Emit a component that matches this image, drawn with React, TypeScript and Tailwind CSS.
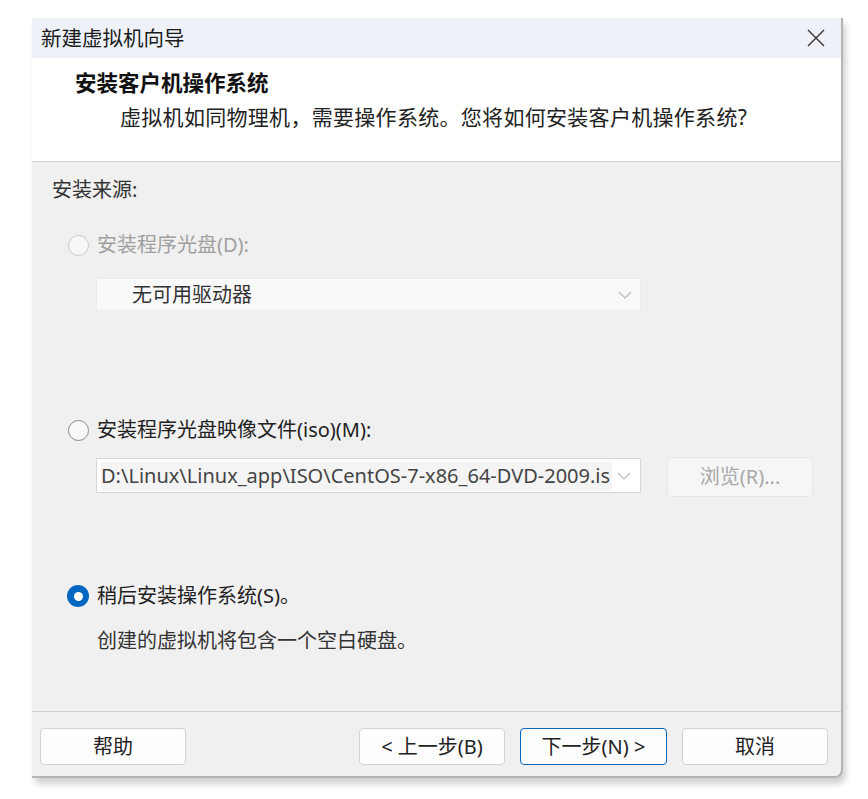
import React from "react";

const font = "font-['Noto_Sans','Noto_Sans_CJK_SC',sans-serif]";

function Chevron({ className }: { className?: string }) {
  return (
    <svg width="14" height="8" viewBox="0 0 14 8" className={className}>
      <path d="M1 1 L7 7 L13 1" fill="none" stroke="currentColor" strokeWidth="1.2" />
    </svg>
  );
}

function Radio({ checked, disabled }: { checked?: boolean; disabled?: boolean }) {
  if (checked) {
    return (
      <span className="flex h-[22px] w-[22px] shrink-0 items-center justify-center rounded-full bg-[#0067c0]">
        <span className="h-[9px] w-[9px] rounded-full bg-white" />
      </span>
    );
  }
  return (
    <span
      className={
        disabled
          ? "h-[21px] w-[21px] shrink-0 rounded-full border border-[#c6c6c6] bg-[#f7f7f7]"
          : "h-[21px] w-[21px] shrink-0 rounded-full border border-[#888888] bg-[#f9f9f9]"
      }
    />
  );
}

function FooterButton({ label, primary }: { label: string; primary?: boolean }) {
  return (
    <button
      className={
        primary
          ? "flex h-[37px] w-[147px] items-center justify-center rounded-[4px] border border-[#0067c0] bg-[#fdfdfd] text-[20px] text-[#222]"
          : "flex h-[37px] w-[146px] items-center justify-center rounded-[4px] border border-[#d3d3d3] bg-[#fdfdfd] text-[20px] text-[#222]"
      }
    >
      {label}
    </button>
  );
}

export default function App() {
  return (
    <div className={`min-h-[799px] w-[868px] bg-white pl-[32px] pt-[18px] ${font}`}>
      <div className="flex h-[760px] w-[811px] flex-col overflow-hidden rounded-br-[8px] border-b-2 border-r-2 border-[#b4b4b4] bg-[#f0f0f0] shadow-[3px_6px_6px_rgba(0,0,0,0.18)]">
        {/* title bar */}
        <div className="flex h-[40px] shrink-0 items-center justify-between bg-[#eef2f8] pl-[9px] pr-[16px]">
          <span className="text-[20.5px] leading-none text-[#1a1a1a]">新建虚拟机向导</span>
          <svg width="18" height="18" viewBox="0 0 18 18" className="text-[#333]">
            <path d="M1 1 L17 17 M17 1 L1 17" stroke="currentColor" strokeWidth="1.4" />
          </svg>
        </div>

        {/* header */}
        <div className="flex h-[104px] shrink-0 flex-col border-b border-[#d2d2d2] bg-white pl-[43px]">
          <div className="mt-[11px] text-[21.5px] font-bold leading-[28px] text-[#111]">
            安装客户机操作系统
          </div>
          <div className="ml-[45px] mt-[6px] text-[21px] leading-[28px] tracking-[0.3px] text-[#222]">
            虚拟机如同物理机，需要操作系统。您将如何安装客户机操作系统?
          </div>
        </div>

        {/* install source */}
        <div className="flex flex-1 flex-col pl-[20px] text-[20px] leading-[28px]">
          <div className="mt-[14px] text-[#333]">安装来源:</div>

          <div className="ml-[16px] mt-[27px] flex items-center gap-[8px] text-[#a0a0a0]">
            <Radio disabled />
            <span>安装程序光盘(D):</span>
          </div>
          <div className="ml-[44px] mt-[19px] flex h-[33px] w-[545px] items-center justify-between border border-[#ececec] bg-[#f9f9f9] pl-[35px] pr-[8px] text-[#333]">
            <span>无可用驱动器</span>
            <Chevron className="text-[#b8b8b8]" />
          </div>

          <div className="ml-[16px] mt-[105px] flex items-center gap-[8px] text-[#222]">
            <Radio />
            <span>安装程序光盘映像文件(iso)(M):</span>
          </div>
          <div className="mt-[14px] flex items-start">
            <div className="ml-[44px] flex h-[35px] w-[545px] items-center justify-between border border-[#d8d8d8] bg-white pl-[4px] pr-[9px]">
              <span className="whitespace-nowrap bg-[#f4f4f4] pr-[2px] text-[20px] text-[#444]">
                D:\Linux\Linux_app\ISO\CentOS-7-x86_64-DVD-2009.is
              </span>
              <Chevron className="shrink-0 text-[#b8b8b8]" />
            </div>
            <button className="ml-[26px] mt-[-1px] flex h-[40px] w-[146px] items-center justify-center rounded-[4px] border border-[#e6e6e6] bg-[#f6f6f6] text-[#a8a8a8]">
              浏览(R)...
            </button>
          </div>

          <div className="ml-[15px] mt-[85px] flex items-center gap-[8px] text-[#222]">
            <Radio checked />
            <span>稍后安装操作系统(S)。</span>
          </div>
          <div className="ml-[45px] mt-[17px] text-[#333]">创建的虚拟机将包含一个空白硬盘。</div>
        </div>

        {/* buttons */}
        <div className="flex h-[65px] shrink-0 items-start border-t border-[#d0d0d0] pl-[8px] pr-[13px] pt-[16px]">
          <FooterButton label="帮助" />
          <div className="ml-auto flex gap-[15px]">
            <FooterButton label="< 上一步(B)" />
            <FooterButton label="下一步(N) >" primary />
            <FooterButton label="取消" />
          </div>
        </div>
      </div>
    </div>
  );
}
